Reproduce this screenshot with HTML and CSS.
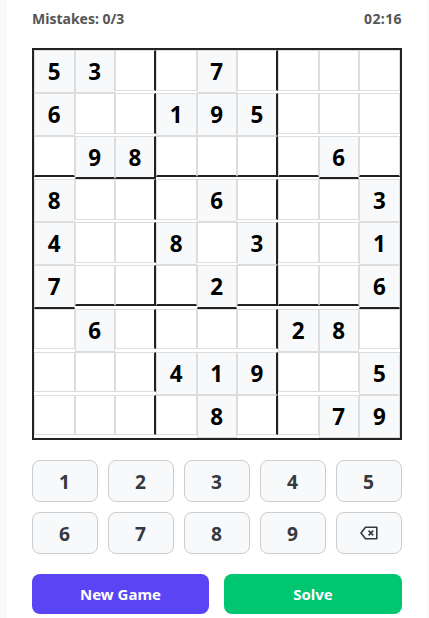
FILE: index.html
```html
<!DOCTYPE html>
<html lang="en">
<head>
  <meta charset="UTF-8">
  <meta name="viewport" content="width=device-width, initial-scale=1.0">
  <title>Sudoku</title>
  <link rel="stylesheet" href="styles.css">
</head>
<body>
  <div class="game">
    <div class="status">
      <span>Mistakes: 0/3</span>
      <span class="timer">02:16</span>
    </div>

    <div class="board">
      <div class="cell given">5</div><div class="cell given">3</div><div class="cell box-right"></div><div class="cell"></div><div class="cell given">7</div><div class="cell box-right"></div><div class="cell"></div><div class="cell"></div><div class="cell"></div>
      <div class="cell given">6</div><div class="cell"></div><div class="cell box-right"></div><div class="cell given">1</div><div class="cell given">9</div><div class="cell given box-right">5</div><div class="cell"></div><div class="cell"></div><div class="cell"></div>
      <div class="cell box-bottom"></div><div class="cell given box-bottom">9</div><div class="cell given box-right box-bottom">8</div><div class="cell box-bottom"></div><div class="cell box-bottom"></div><div class="cell box-right box-bottom"></div><div class="cell box-bottom"></div><div class="cell given box-bottom">6</div><div class="cell box-bottom"></div>
      <div class="cell given">8</div><div class="cell"></div><div class="cell box-right"></div><div class="cell"></div><div class="cell given">6</div><div class="cell box-right"></div><div class="cell"></div><div class="cell"></div><div class="cell given">3</div>
      <div class="cell given">4</div><div class="cell"></div><div class="cell box-right"></div><div class="cell given">8</div><div class="cell"></div><div class="cell given box-right">3</div><div class="cell"></div><div class="cell"></div><div class="cell given">1</div>
      <div class="cell given box-bottom">7</div><div class="cell box-bottom"></div><div class="cell box-right box-bottom"></div><div class="cell box-bottom"></div><div class="cell given box-bottom">2</div><div class="cell box-right box-bottom"></div><div class="cell box-bottom"></div><div class="cell box-bottom"></div><div class="cell given box-bottom">6</div>
      <div class="cell"></div><div class="cell given">6</div><div class="cell box-right"></div><div class="cell"></div><div class="cell"></div><div class="cell box-right"></div><div class="cell given">2</div><div class="cell given">8</div><div class="cell"></div>
      <div class="cell"></div><div class="cell"></div><div class="cell box-right"></div><div class="cell given">4</div><div class="cell given">1</div><div class="cell given box-right">9</div><div class="cell"></div><div class="cell"></div><div class="cell given">5</div>
      <div class="cell"></div><div class="cell"></div><div class="cell box-right"></div><div class="cell"></div><div class="cell given">8</div><div class="cell box-right"></div><div class="cell"></div><div class="cell given">7</div><div class="cell given">9</div>
    </div>

    <div class="keypad">
      <button class="key">1</button>
      <button class="key">2</button>
      <button class="key">3</button>
      <button class="key">4</button>
      <button class="key">5</button>
      <button class="key">6</button>
      <button class="key">7</button>
      <button class="key">8</button>
      <button class="key">9</button>
      <button class="key" aria-label="Erase">
        <svg width="18" height="14" viewBox="0 0 18 14" fill="none" stroke="currentColor" stroke-width="1.6">
          <path d="M5.5 1.2H16.8V12.8H5.5L1 7Z" stroke-linejoin="round"/>
          <path d="M8.6 4.6L13.2 9.4M13.2 4.6L8.6 9.4"/>
        </svg>
      </button>
    </div>

    <div class="actions">
      <button class="action new-game">New Game</button>
      <button class="action solve">Solve</button>
    </div>
  </div>
</body>
</html>
```

FILE: styles.css
```css
body {
  font-family: 'Noto Sans', sans-serif;
  background-color: #f8f9fa;
  margin: 0;
  padding: 0 2px 0 7px;
  height: 618px;
  overflow: hidden;
}

.game {
  background-color: #fff;
  padding: 9px 25px 0;
  height: 618px;
  box-sizing: border-box;
}

.status {
  display: flex;
  justify-content: space-between;
  height: 39px;
  font-size: 14px;
  font-weight: 700;
  line-height: 19px;
  color: #555;
}

.timer {
  letter-spacing: 0.4px;
}

.board {
  display: grid;
  grid-template-columns: repeat(9, 1fr);
  grid-auto-rows: 43.1px;
  border: 2px solid #222;
  height: 392px;
  box-sizing: border-box;
}

.cell {
  box-sizing: border-box;
  height: 40.67px;
  border: 1px solid #ddd;
  padding-right: 0.6px;
  display: flex;
  align-items: center;
  justify-content: center;
  font-size: 22.4px;
  font-weight: 700;
  color: #000;
}

.given {
  height: 43.1px;
  background-color: #f8f9fa;
}

.box-right {
  border-right: 2px solid #222;
}

.box-bottom {
  border-bottom: 2px solid #222;
}

.keypad {
  display: grid;
  grid-template-columns: repeat(5, 1fr);
  gap: 10px;
  margin-top: 20px;
}

.key {
  height: 42px;
  border: 1px solid #ccc;
  border-radius: 8px;
  background-color: #f8f9fa;
  color: #343a40;
  font-family: inherit;
  font-size: 19.2px;
  font-weight: 700;
  padding: 0 1px 0 0;
  display: flex;
  align-items: center;
  justify-content: center;
}

.actions {
  display: flex;
  gap: 15px;
  margin-top: 20px;
}

.action {
  flex: 1;
  height: 40px;
  border: none;
  border-radius: 8px;
  color: #fff;
  font-family: inherit;
  font-size: 15px;
  font-weight: 700;
}

.new-game {
  flex: none;
  width: 177px;
  background-color: #5a45f5;
}

.solve {
  background-color: #00c571;
}
```
